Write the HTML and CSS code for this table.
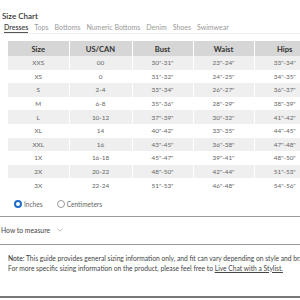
FILE: index.html
```html
<!DOCTYPE html>
<html lang="en">
<head>
    <meta charset="UTF-8">
    <title>Size Chart</title>
    <link rel="stylesheet" href="styles.css">
</head>
<body>

<h1 class="title">Size Chart</h1>

<div class="tabs">
    <span class="tab active">Dresses</span>
    <span class="tab">Tops</span>
    <span class="tab">Bottoms</span>
    <span class="tab">Numeric Bottoms</span>
    <span class="tab">Denim</span>
    <span class="tab">Shoes</span>
    <span class="tab">Swimwear</span>
</div>

<table class="chart">
    <thead>
        <tr>
            <th>Size</th>
            <th>US/CAN</th>
            <th>Bust</th>
            <th>Waist</th>
            <th>Hips</th>
        </tr>
    </thead>
    <tbody>
        <tr><td>XXS</td><td>00</td><td>30"-31"</td><td>23"-24"</td><td>33"-34"</td></tr>
        <tr><td>XS</td><td>0</td><td>31"-32"</td><td>24"-25"</td><td>34"-35"</td></tr>
        <tr><td>S</td><td>2-4</td><td>33"-34"</td><td>26"-27"</td><td>36"-37"</td></tr>
        <tr><td>M</td><td>6-8</td><td>35"-36"</td><td>28"-29"</td><td>38"-39"</td></tr>
        <tr><td>L</td><td>10-12</td><td>37"-39"</td><td>30"-32"</td><td>41"-42"</td></tr>
        <tr><td>XL</td><td>14</td><td>40"-42"</td><td>33"-35"</td><td>44"-45"</td></tr>
        <tr><td>XXL</td><td>16</td><td>43"-45"</td><td>36"-38"</td><td>47"-48"</td></tr>
        <tr><td>1X</td><td>16-18</td><td>45"-47"</td><td>39"-41"</td><td>48"-50"</td></tr>
        <tr><td>2X</td><td>20-22</td><td>48"-50"</td><td>42"-44"</td><td>51"-53"</td></tr>
        <tr><td>3X</td><td>22-24</td><td>51"-53"</td><td>46"-48"</td><td>54"-56"</td></tr>
    </tbody>
</table>

<div class="units">
    <label class="unit"><span class="radio checked"></span>Inches</label>
    <label class="unit"><span class="radio"></span>Centimeters</label>
</div>

<div class="measure">
    How to measure
    <svg class="chevron" width="6" height="4" viewBox="0 0 6 4"><path d="M0.5 0.8 L3 3.2 L5.5 0.8" fill="none" stroke="#aaa" stroke-width="0.8"/></svg>
</div>

<div class="note">
    <p><b>Note:</b> This guide provides general sizing information only, and fit can vary depending on style and brand.</p>
    <p>For more specific sizing information on the product, please feel free to <a href="#">Live Chat with a Stylist.</a></p>
</div>

</body>
</html>
```

FILE: styles.css
```css
* {
    margin: 0;
    padding: 0;
    box-sizing: border-box;
}

body {
    font-family: Lato, "Open Sans", Arial, sans-serif;
    background: #fff;
    color: #555;
    width: 300px;
    height: 300px;
    overflow: hidden;
}

.title {
    font-size: 8px;
    font-weight: 600;
    color: #333;
    line-height: 10px;
    padding: 11px 0 0 2px;
}

.tabs {
    display: flex;
    gap: 6px;
    padding: 2px 0 0 4px;
    border-bottom: 1px solid #eee;
    white-space: nowrap;
}

.tab {
    font-size: 7px;
    line-height: 8px;
    color: #999;
    padding-bottom: 1px;
}

.tab.active {
    color: #444;
    font-weight: 600;
    border-bottom: 1px solid #555;
}

.chart {
    margin: 7px 0 0 8px;
    border-collapse: collapse;
    table-layout: fixed;
    width: 308px;
}

.chart th {
    background: #d6d6d6;
    color: #333;
    font-size: 7.6px;
    font-weight: 700;
    height: 15px;
    border-right: 1px solid #fff;
}

.chart th:nth-child(1),
.chart td:nth-child(1) { width: 61px; }
.chart th:nth-child(2),
.chart td:nth-child(2) { width: 63px; }
.chart th:nth-child(3),
.chart td:nth-child(3) { width: 61px; }
.chart th:nth-child(4),
.chart td:nth-child(4) { width: 61px; }

.chart td {
    text-align: center;
    font-size: 6.4px;
    color: #666;
    height: 13.6px;
    padding: 0;
    border-right: 1px solid #fff;
}

.chart tbody tr:nth-child(odd) {
    background: #efefef;
}

.units {
    display: flex;
    gap: 14px;
    align-items: center;
    height: 25px;
    padding-left: 14px;
    border-bottom: 1.5px solid #9a9a9a;
}

.unit {
    display: flex;
    align-items: center;
    gap: 2px;
    font-size: 6.6px;
    color: #666;
}

.radio {
    width: 8px;
    height: 8px;
    border-radius: 50%;
    border: 1px solid #999;
    background: #fff;
}

.radio.checked {
    border: 2.2px solid #1f6ccf;
}

.measure {
    display: flex;
    align-items: center;
    gap: 6px;
    height: 28px;
    padding-left: 1px;
    font-size: 6.8px;
    color: #444;
    border-bottom: 1px solid #999;
}

.chevron {
    margin-left: 1px;
}

.note {
    padding: 9px 0 0 8px;
    font-size: 6.7px;
    line-height: 9.7px;
    color: #444;
    white-space: nowrap;
    height: 53px;
    border-bottom: 2px solid #777;
}

.note b {
    font-weight: 600;
}

.note a {
    color: #444;
}
```
